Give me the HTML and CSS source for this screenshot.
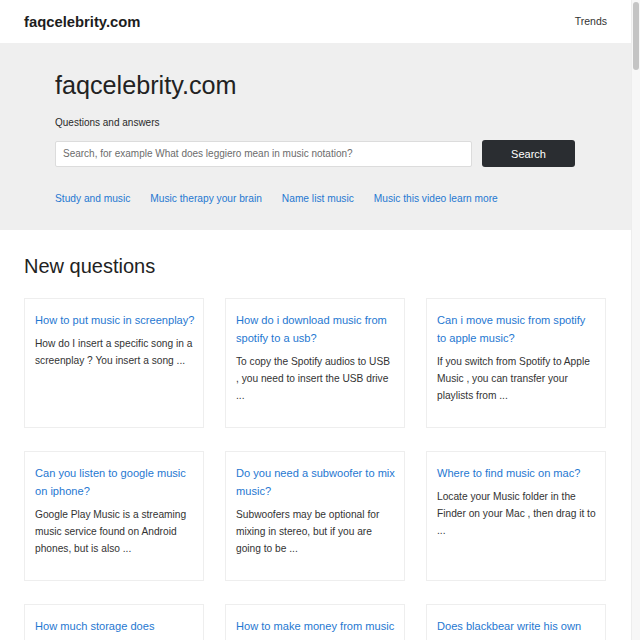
FILE: index.html
```html
<!DOCTYPE html>
<html lang="en">
<head>
<meta charset="utf-8">
<title>faqcelebrity.com</title>
<link rel="stylesheet" href="styles.css">
</head>
<body>
<div class="page">
  <nav class="navbar">
    <a class="brand" href="#">faqcelebrity.com</a>
    <a class="nav-link" href="#">Trends</a>
  </nav>
  <header class="jumbotron">
    <h1 class="title">faqcelebrity.com</h1>
    <p class="lead">Questions and answers</p>
    <form class="search">
      <input class="search-input" type="text" placeholder="Search, for example What does leggiero mean in music notation?">
      <button class="search-btn" type="button">Search</button>
    </form>
    <div class="tags">
      <a href="#">Study and music</a>
      <a href="#">Music therapy your brain</a>
      <a href="#">Name list music</a>
      <a href="#">Music this video learn more</a>
    </div>
  </header>
  <main class="content">
    <h2 class="section-title">New questions</h2>
    <div class="grid">
      <div class="card">
        <a class="card-title" href="#">How to put music in screenplay?</a>
        <p class="card-text">How do I insert a specific song in a screenplay ? You insert a song ...</p>
      </div>
      <div class="card">
        <a class="card-title" href="#">How do i download music from spotify to a usb?</a>
        <p class="card-text">To copy the Spotify audios to USB , you need to insert the USB drive ...</p>
      </div>
      <div class="card">
        <a class="card-title" href="#">Can i move music from spotify to apple music?</a>
        <p class="card-text">If you switch from Spotify to Apple Music , you can transfer your playlists from ...</p>
      </div>
      <div class="card">
        <a class="card-title" href="#">Can you listen to google music on iphone?</a>
        <p class="card-text">Google Play Music is a streaming music service found on Android phones, but is also ...</p>
      </div>
      <div class="card">
        <a class="card-title" href="#">Do you need a subwoofer to mix music?</a>
        <p class="card-text">Subwoofers may be optional for mixing in stereo, but if you are going to be ...</p>
      </div>
      <div class="card">
        <a class="card-title" href="#">Where to find music on mac?</a>
        <p class="card-text">Locate your Music folder in the Finder on your Mac , then drag it to ...</p>
      </div>
      <div class="card">
        <a class="card-title" href="#">How much storage does downloaded music take?</a>
        <p class="card-text">Downloaded music takes up space on your device depending on quality ...</p>
      </div>
      <div class="card">
        <a class="card-title" href="#">How to make money from music app?</a>
        <p class="card-text">There are several ways to earn money with a music app ...</p>
      </div>
      <div class="card">
        <a class="card-title" href="#">Does blackbear write his own songs?</a>
        <p class="card-text">Blackbear is known for writing and producing his own music ...</p>
      </div>
    </div>
  </main>
</div>
<div class="scrollbar"><div class="thumb"></div></div>
</body>
</html>
```

FILE: styles.css
```css
html, body {
  margin: 0;
  padding: 0;
  height: 640px;
  overflow: hidden;
  background: #ffffff;
}
body {
  font-family: "Liberation Sans", Arial, sans-serif;
  color: #333333;
}
a { text-decoration: none; }
.page {
  width: 631px;
}
.navbar {
  height: 43px;
  padding: 0 24px;
  display: flex;
  align-items: center;
  justify-content: space-between;
  background: #ffffff;
  box-sizing: border-box;
}
.brand {
  font-size: 14.8px;
  font-weight: bold;
  color: #1d1d1d;
}
.nav-link {
  font-size: 10.5px;
  color: #333333;
  margin-top: -1px;
}
.jumbotron {
  background: #efefef;
  padding: 27px 56px 24px 55px;
}
.title {
  margin: 0;
  font-size: 25.2px;
  line-height: 30px;
  font-weight: normal;
  color: #222222;
}
.lead {
  margin: 15px 0 0;
  font-size: 10px;
  line-height: 15px;
  color: #2a2a2a;
}
.search {
  display: flex;
  gap: 10px;
  margin-top: 10px;
  align-items: center;
}
.search-input {
  flex: 1;
  height: 26px;
  box-sizing: border-box;
  border: 1px solid #dcdcdc;
  border-radius: 2px;
  background: #ffffff;
  padding: 0 7px;
  font-family: "Liberation Sans", Arial, sans-serif;
  font-size: 10px;
  color: #333;
}
.search-input::placeholder { color: #6c6c6c; }
.search-btn {
  width: 93px;
  height: 27px;
  border: none;
  border-radius: 3px;
  background: #2a2d31;
  color: #ffffff;
  font-family: "Liberation Sans", Arial, sans-serif;
  font-size: 11px;
}
.tags {
  display: flex;
  gap: 20px;
  margin-top: 24px;
  font-size: 10.2px;
  line-height: 15px;
}
.tags a { color: #1f78d1; }
.content {
  padding: 24px 24px 0;
}
.section-title {
  margin: 0 0 20px;
  font-size: 20px;
  line-height: 24px;
  font-weight: normal;
  color: #222222;
}
.grid {
  display: grid;
  grid-template-columns: repeat(3, 180px);
  column-gap: 21px;
  row-gap: 23px;
}
.card {
  border: 1px solid #eeeeee;
  padding: 12px 9px 15px 10px;
  box-sizing: border-box;
  min-height: 129px;
}
.card-title {
  display: block;
  font-size: 11.08px;
  line-height: 18px;
  color: #1f78d1;
  margin: 0 -1px 6px 0;
}
.card-text {
  margin: 0 0 8px;
  font-size: 10.2px;
  line-height: 17px;
  color: #333333;
}
.scrollbar {
  position: fixed;
  top: 0;
  right: 0;
  width: 9px;
  height: 640px;
  background: #f7f7f7;
  border-left: 1px solid #ededed;
  box-sizing: border-box;
}
.thumb {
  margin: 2px 0 0 1px;
  width: 6px;
  height: 68px;
  border-radius: 3px;
  background: #c4c4c4;
}
```
